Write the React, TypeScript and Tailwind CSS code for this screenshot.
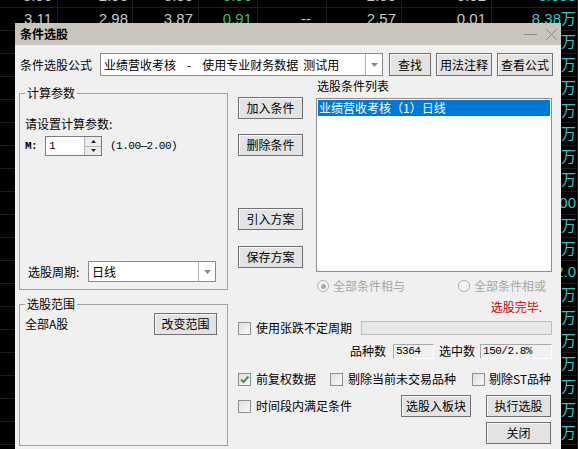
import React from "react";

// Quote table behind the dialog
const cellW = [
  "w-[58px]",
  "w-[75px]",
  "w-[66px]",
  "w-[59px]",
  "w-[69px]",
  "w-[75px]",
  "w-[90px]",
  "w-[86px]",
];
const cellPad = [
  "pr-[5px]",
  "pr-[4px]",
  "pr-[5px]",
  "pr-[5px]",
  "pr-[15px]",
  "pr-[5px]",
  "pr-[5px]",
  "pr-[1px]",
];
const cellColor = [
  "text-[#c8c8c8]",
  "text-[#c8c8c8]",
  "text-[#c8c8c8]",
  "text-[#3fbf5f]",
  "text-[#c8c8c8]",
  "text-[#c8c8c8]",
  "text-[#c8c8c8]",
  "text-[#37c4c4]",
];

const lastCol = [
  "5.088",
  "8.38万",
  "2.16万",
  "4.07万",
  "1.93万",
  "3.55万",
  "7.21万",
  "9.40万",
  "6.12万",
  "1200",
  "5.62万",
  "1.08万",
  "12.0",
  "3.77万",
  "6.15万",
  "2.49万",
  "8.02万",
  "1.66万",
  "4.93万",
  "7.35万",
  "2.20万",
];

const quoteRows: string[][] = lastCol.map((v, i) => {
  if (i === 0) return ["3.06", "2.93", "3.80", "0.96", "--", "2.55", "0.02", v];
  if (i === 1) return ["3.11", "2.98", "3.87", "0.91", "--", "2.57", "0.01", v];
  return ["", "", "", "", "", "", "", v];
});

function QuoteTable() {
  return (
    <div className="-mt-[15px] font-['Liberation_Sans',Arial,'Noto_Sans_CJK_SC',sans-serif] text-[15px]">
      {quoteRows.map((row, r) => (
        <div key={r} className="flex h-[23px] border-b border-[#1d1d1d]">
          {row.map((v, c) => (
            <div
              key={c}
              className={`${cellW[c]} ${cellPad[c]} ${cellColor[c]} h-full shrink-0 border-r border-[#1d1d1d] text-right leading-[22px] whitespace-nowrap`}
            >
              {v}
            </div>
          ))}
        </div>
      ))}
    </div>
  );
}

const mono = "font-['Liberation_Mono',monospace] text-[11px] tracking-[-0.5px]";

function Btn({ children, className }: { children: React.ReactNode; className: string }) {
  return (
    <div
      className={`flex shrink-0 items-center justify-center border border-[#707070] bg-[#e3e3e3] shadow-[inset_1px_1px_0_#f8f8f8] ${className}`}
    >
      {children}
    </div>
  );
}

function Arrow() {
  return (
    <svg width="7" height="4" viewBox="0 0 7 4">
      <path d="M0 0H7L3.5 4Z" fill="#8a8a8a" />
    </svg>
  );
}

function Combo({ children, className }: { children: React.ReactNode; className: string }) {
  return (
    <div className={`flex shrink-0 border border-[#8a8a8a] bg-white ${className}`}>
      <div className="flex flex-1 items-center overflow-hidden pl-[3px] whitespace-nowrap">{children}</div>
      <div className="flex w-[17px] items-center justify-center border-l border-[#b4b4b4]">
        <Arrow />
      </div>
    </div>
  );
}

function Check({ checked }: { checked?: boolean }) {
  return (
    <span className="flex h-[13px] w-[13px] shrink-0 items-center justify-center border border-[#8f8f8f] bg-gradient-to-br from-[#dedede] to-[#fbfbfb]">
      {checked && (
        <svg width="11" height="11" viewBox="0 0 11 11">
          <path d="M2 5.5L4.5 8L9.5 2.5" stroke="#2e9e3c" strokeWidth="2" fill="none" />
        </svg>
      )}
    </span>
  );
}

function Radio({ on }: { on?: boolean }) {
  return (
    <span className="flex h-[12px] w-[12px] shrink-0 items-center justify-center rounded-full border border-[#b0b0b0] bg-[#f4f4f4]">
      {on && <span className="h-[5px] w-[5px] rounded-full bg-[#a8a8a8]" />}
    </span>
  );
}

function Spin() {
  return (
    <div className="flex h-[20px] w-[57px] shrink-0 border border-[#7a7a7a] bg-white">
      <div className={`flex flex-1 items-center pl-[3px] ${mono}`}>1</div>
      <div className="flex w-[17px] flex-col border-l border-[#b8b8b8] bg-[#ececec]">
        <div className="flex flex-1 items-center justify-center border-b border-[#b8b8b8]">
          <svg width="5" height="3" viewBox="0 0 5 3">
            <path d="M0 3H5L2.5 0Z" fill="#222" />
          </svg>
        </div>
        <div className="flex flex-1 items-center justify-center">
          <svg width="5" height="3" viewBox="0 0 5 3">
            <path d="M0 0H5L2.5 3Z" fill="#222" />
          </svg>
        </div>
      </div>
    </div>
  );
}

function Field({ children, className }: { children: React.ReactNode; className: string }) {
  return (
    <div
      className={`flex h-[15px] shrink-0 items-center border border-t-[#a8a8a8] border-l-[#a8a8a8] border-b-white border-r-white pl-[2px] ${mono} ${className}`}
    >
      {children}
    </div>
  );
}

function LeftColumn() {
  return (
    <div className="ml-[4px] w-[209px] shrink-0">
      <fieldset className="mt-[10px] h-[204px] border border-[#a0a0a0]">
        <legend className="ml-[5px] px-[2px] leading-[14px]">计算参数</legend>
        <div className="ml-[5px] mt-[17px] leading-[14px]">请设置计算参数:</div>
        <div className="mt-[5px] flex h-[20px] items-center pl-[5px]">
          <span className={`w-[20px] font-bold ${mono}`}>M:</span>
          <Spin />
          <span className={`ml-[8px] ${mono}`}>(1.00—2.00)</span>
        </div>
        <div className="mt-[105px] flex h-[21px] items-center pl-[8px]">
          <span className="w-[60px]">选股周期:</span>
          <Combo className="h-[21px] w-[128px]">日线</Combo>
        </div>
      </fieldset>
      <fieldset className="mt-[7px] h-[149px] border border-[#a0a0a0]">
        <legend className="ml-[5px] px-[2px] leading-[14px]">选股范围</legend>
        <div className="mt-[1px] flex h-[23px] items-center pl-[5px]">
          <span>全部A股</span>
          <Btn className="ml-auto mr-[10px] h-[22px] w-[63px]">改变范围</Btn>
        </div>
      </fieldset>
    </div>
  );
}

function RightColumn() {
  return (
    <div className="ml-[10px] w-[315px] shrink-0">
      <div className="flex">
        <div className="flex w-[65px] shrink-0 flex-col">
          <Btn className="mt-[21px] h-[22px] w-[65px]">加入条件</Btn>
          <Btn className="mt-[15px] h-[22px] w-[65px]">删除条件</Btn>
          <Btn className="mt-[52px] h-[22px] w-[65px]">引入方案</Btn>
          <Btn className="mt-[16px] h-[22px] w-[65px]">保存方案</Btn>
        </div>
        <div className="ml-[13px] w-[236px] shrink-0">
          <div className="ml-[1px] mt-[3px] h-[14px] leading-[14px]">选股条件列表</div>
          <div className="mt-[5px] h-[174px] border border-[#8c8c8c] bg-white p-[1px]">
            <div className="flex h-[16px] items-center bg-[#0078d7] pl-[1px] text-white">业绩营收考核（1）日线</div>
          </div>
        </div>
      </div>

      <div className="ml-[79px] mt-[6px] flex h-[16px] items-center text-[#a6a6a6]">
        <Radio on />
        <span className="ml-[4px]">全部条件相与</span>
        <span className="ml-[53px]">
          <Radio />
        </span>
        <span className="ml-[4px]">全部条件相或</span>
      </div>

      <div className="mt-[6px] h-[14px] pr-[11px] text-right leading-[14px] text-[#d40000]">选股完毕.</div>

      <div className="mt-[6px] flex h-[16px] items-center">
        <Check />
        <span className="ml-[5px]">使用张跌不定周期</span>
        <div className="ml-auto mr-[1px] h-[14px] w-[191px] border border-[#bcbcbc] bg-[#e8e8e8]" />
      </div>

      <div className="mt-[7px] flex h-[16px] items-center">
        <span className="ml-[112px]">品种数</span>
        <Field className="ml-[7px] w-[41px]">5364</Field>
        <span className="ml-[5px]">选中数</span>
        <Field className="ml-[5px] w-[72px]">150/2.8%</Field>
      </div>

      <div className="mt-[12px] flex h-[16px] items-center">
        <Check checked />
        <span className="ml-[5px]">前复权数据</span>
        <span className="ml-[14px]">
          <Check />
        </span>
        <span className="ml-[5px]">剔除当前未交易品种</span>
        <span className="ml-[16px]">
          <Check />
        </span>
        <span className="ml-[4px]">剔除ST品种</span>
      </div>

      <div className="mt-[8px] flex h-[22px] items-center">
        <Check />
        <span className="ml-[5px]">时间段内满足条件</span>
        <Btn className="ml-auto h-[22px] w-[70px]">选股入板块</Btn>
        <Btn className="ml-[15px] mr-[2px] h-[22px] w-[65px]">执行选股</Btn>
      </div>

      <div className="mt-[5px] flex justify-end pr-[2px]">
        <Btn className="h-[22px] w-[65px]">关闭</Btn>
      </div>
    </div>
  );
}

function Dialog() {
  return (
    <div className="absolute left-[15px] top-[23px] h-[430px] w-[546px] bg-[#f0f0f0] text-[12px] leading-[14px] text-black font-['Noto_Sans_CJK_SC','Noto_Sans',sans-serif]">
      <div className="flex h-[22px] items-center bg-[#c9c5bc] pl-[5px] pr-[3px]">
        <span className="font-bold">条件选股</span>
        <div className="ml-auto flex items-center gap-[8px]">
          <svg width="13" height="13" viewBox="0 0 13 13">
            <path d="M0 6.5H13" stroke="#8c8c8c" strokeWidth="1" />
          </svg>
          <svg width="13" height="13" viewBox="0 0 13 13">
            <path d="M1 1L12 12M12 1L1 12" stroke="#8c8c8c" strokeWidth="1" />
          </svg>
        </div>
      </div>

      <div className="flex h-[31px] items-end">
        <div className="flex h-[23px] items-center pl-[5px]">
          <span className="w-[80px] shrink-0">条件选股公式</span>
          <Combo className="h-[23px] w-[283px]">
            <span>业绩营收考核</span>
            <span className="mx-[11px]">-</span>
            <span>使用专业财务数据</span>
            <span className="ml-[5px]">测试用</span>
          </Combo>
          <Btn className="ml-[6px] h-[23px] w-[42px]">查找</Btn>
          <Btn className="ml-[5px] h-[23px] w-[56px]">用法注释</Btn>
          <Btn className="ml-[5px] h-[23px] w-[56px]">查看公式</Btn>
        </div>
      </div>

      <div className="flex">
        <LeftColumn />
        <RightColumn />
      </div>
    </div>
  );
}

export default function App() {
  return (
    <div className="relative h-[449px] w-[578px] overflow-hidden bg-black">
      <QuoteTable />
      <Dialog />
    </div>
  );
}
